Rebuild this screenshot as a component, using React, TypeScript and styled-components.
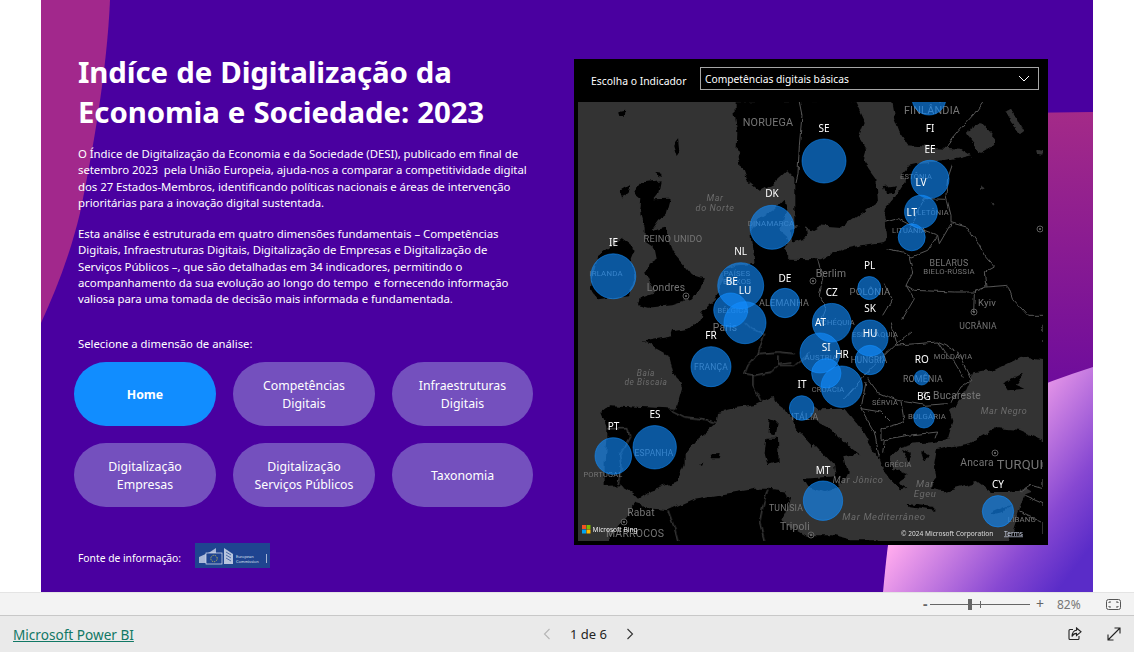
import React from "react";
import styled, { createGlobalStyle } from "styled-components";

const Global = createGlobalStyle`
  html, body { margin: 0; padding: 0; width: 1134px; height: 652px; overflow: hidden; background: #fff; }
  body { font-family: "Noto Sans", "Open Sans", sans-serif; }
`;

const Page = styled.div`
  width: 1134px; height: 652px; display: flex; flex-direction: column; background: #fff;
`;
const Stage = styled.div`
  height: 592px; display: flex; justify-content: center;
`;
const Canvas = styled.main`
  position: relative; width: 1052px; height: 592px; background: #4a00a0; overflow: hidden;
  display: flex; align-items: flex-start; color: #fff;
`;
const Decor = styled.svg`
  position: absolute; inset: 0; width: 1052px; height: 592px;
`;
const Left = styled.section`
  position: relative; width: 500px; margin-left: 33px; padding-top: 52px; display: flex; flex-direction: column;
`;
const Title = styled.h1`
  margin: 0 0 0 4px; font-size: 29.4px; line-height: 40px; font-weight: 700; white-space: nowrap; letter-spacing: -0.1px; word-spacing: 0.6px;
`;
const Body = styled.p<{ $top: number }>`
  margin: ${(p) => p.$top}px 0 0 4px; font-size: 11.4px; line-height: 16.3px; white-space: pre; letter-spacing: -0.04px;
`;
const Prompt = styled.div`
  margin: 28px 0 0 4px; font-size: 11.3px; line-height: 16px;
`;
const Buttons = styled.div`
  margin-top: 10px; display: grid; grid-template-columns: 142px 142px 141px; grid-auto-rows: 64px; column-gap: 17px; row-gap: 17px;
`;
const Pill = styled.button<{ $active?: boolean }>`
  border: 0; border-radius: 32px; padding: 2px 0 0; color: #fff; text-align: center; cursor: pointer;
  font-family: inherit; font-size: 12.3px; line-height: 17.5px;
  font-weight: ${(p) => (p.$active ? 700 : 400)};
  background: ${(p) => (p.$active ? "#118dff" : "#7450be")};
`;
const Source = styled.div`
  margin: 36px 0 0 4px; display: flex; align-items: center; gap: 14px; font-size: 10.3px;
`;
const SourceLabel = styled.span`
  padding-top: 5px;
`;
const LogoBox = styled.svg`
  width: 75px; height: 25px; display: block;
`;
const Panel = styled.section`
  position: relative; margin: 59px 0 0 0; width: 474px; height: 486px; background: #000; display: flex; flex-direction: column; padding: 8px 5px 4px 4px; box-sizing: border-box;
`;
const SlicerRow = styled.div`
  display: flex; align-items: center; height: 23px; margin-bottom: 12px; padding-left: 13px;
`;
const SlicerLabel = styled.span`
  width: 109px; font-size: 10.4px; white-space: nowrap; position: relative; top: 2px;
`;
const Select = styled.div`
  width: 339px; height: 23px; box-sizing: border-box; border: 1px solid #a6a6a6; display: flex; align-items: center; justify-content: space-between;
  padding: 0 8px 0 4px; font-size: 10.25px;
`;
const MapSvg = styled.svg`
  width: 465px; height: 439px; display: block;
`;
const ZoomBar = styled.div`
  height: 22px; background: #f3f3f3; border-top: 1px solid #e4e4e4; border-bottom: 1px solid #c8c8c8;
  display: flex; align-items: center; justify-content: flex-end; color: #666; font-size: 12px; padding-right: 13px;
`;
const Minus = styled.span`
  width: 7px; font-size: 14px; font-weight: 700; line-height: 1;
`;
const Track = styled.div`
  position: relative; width: 100px; height: 1px; background: #666; margin-right: 5px;
`;
const Thumb = styled.i`
  position: absolute; left: 38px; top: -5px; width: 4px; height: 11px; background: #666;
`;
const Tick = styled.i`
  position: absolute; left: 50px; top: -3px; width: 1px; height: 7px; background: #666;
`;
const Plus = styled.span`
  width: 10px; font-size: 14px; line-height: 1; text-align: center;
`;
const Percent = styled.span`
  width: 28px; margin-left: 12px; margin-right: 21px; color: #777; font-size: 12px;
`;
const Footer = styled.footer`
  flex: 1; background: #eaeaea; display: grid; grid-template-columns: 1fr auto 1fr; align-items: center; padding: 0 13px;
`;
const BrandLink = styled.a`
  color: #117865; font-size: 13.6px; text-decoration: underline; white-space: nowrap;
`;
const Pager = styled.div`
  display: flex; align-items: center; gap: 16px; font-size: 13px; color: #252423; margin-left: 43px;
`;
const Actions = styled.div`
  display: flex; justify-content: flex-end; gap: 25px;
`;

const land: Record<string, string[]> = {
  a: [
    "M470,-5 L470,40 478,90 476,135 488,190 505,235 545,266 585,245 628,205 650,228 665,240 690,300 720,370 790,375 900,300 895,230 830,140 860,60 830,-5Z",
    "M530,486 L520,385 545,352 590,322 620,290 626,318 610,380 632,420 612,442 640,470 705,472 705,665 364,665 368,630 410,590 430,540 442,500 480,490Z",
    "M640,382 L680,370 684,408 645,422Z",
    "M210,240 L245,235 236,280 226,292 275,290 262,340 240,356 218,388 265,376 285,450 320,490 345,520 380,530 370,560 340,590 280,610 210,617 180,610 186,586 232,570 216,540 205,512 215,482 236,470 230,440 200,420 200,380 186,330 190,292 166,272 190,240Z",
    "M60,462 L130,410 170,440 158,470 170,530 150,580 60,592 38,560 50,502Z",
    "M124,30 L142,26 140,42 128,42Z M236,210 L250,212 250,224 238,222Z M128,262 L155,245 150,270 135,290Z M286,130 L300,112 304,150 296,162Z",
  ],
  b: [
    "M-50,-5 L-50,370 0,385 30,368 60,340 100,300 110,232 150,190 165,140 115,60 130,-5Z",
    "M240,-5 L250,50 265,90 290,130 360,135 450,140 480,160 430,172 400,178 330,182 290,192 270,215 282,240 250,290 225,320 220,345 225,400 220,420 150,430 100,440 50,460 30,472 0,472 -10,665 705,665 705,-5Z",
    "M130,320 L160,280 165,300 145,330Z M218,255 L255,250 250,272 225,275Z",
  ],
  c: [
    "M365,-5 L340,15 285,25 280,40 195,55 230,80 275,105 285,145 300,175 312,200 295,260 190,255 100,250 70,272 85,310 85,350 80,420 80,492 125,490 160,510 180,530 210,510 270,490 300,480 320,430 320,400 360,350 415,305 420,270 470,258 530,250 580,225 620,255 640,290 655,320 705,375 705,-5Z",
    "M575,290 L596,298 590,342 572,335Z M565,350 L600,350 602,420 570,430 560,395Z M398,398 L425,396 422,412 402,412Z M362,425 L376,423 372,432Z",
    "M80,665 L100,640 140,590 175,545 230,560 270,565 350,530 440,515 530,500 570,500 620,505 636,530 625,570 610,600 680,640 705,648 705,665Z",
  ],
  d: [
    "M-10,-5 L-10,240 30,262 100,260 150,320 190,390 205,410 215,440 235,470 270,505 292,500 260,480 290,460 250,440 240,400 265,376 300,365 370,360 418,345 412,344 427,294 417,264 457,224 487,154 547,144 587,124 627,104 696,114 696,-5Z",
    "M696,354 L627,324 557,319 477,364 417,374 380,385 372,432 376,462 360,500 400,508 440,496 500,480 540,510 600,510 640,500 660,512 640,520 622,572 592,665 696,665Z",
    "M577,184 L637,154 612,188 640,200 590,205Z",
    "M-10,345 L70,430 75,470 95,482 110,450 100,402 135,395 150,400 110,370 60,322 0,290 -10,280Z",
    "M-20,470 L80,462 86,490 62,504 40,510 -5,496Z",
    "M290,545 L370,555 370,566 300,556Z",
    "M270,380 L300,395 290,420Z M330,390 L350,400 340,420Z",
    "M-10,640 L60,640 120,655 200,655 200,665 -10,665Z",
    "M540,570 L600,545 575,572 550,578Z",
  ],
};

const seaPatches: Record<string, string[]> = {
  b: [
    "M465,90 L510,60 556,110 545,136 510,156 480,120Z",
    "M582,30 L600,20 640,86 628,96 600,60Z",
    "M510,245 L525,255 505,262Z M672,142 L696,148 694,158 675,156Z M540,300 L552,308 546,314Z",
  ],
};

const borders: Record<string, string[]> = {
  a: ["M664,0 L672,40 664,130 660,215 654,240"],
  b: [
    "M515,0 L490,35 440,90 405,135",
    "M425,185 L410,230 405,280 420,340 420,362 470,376 500,420 520,460 550,495 520,512 525,555 590,550 605,590 650,640 699,640",
    "M225,360 L260,350 300,370 380,400 350,445 300,465 275,450 225,440",
    "M300,368 L340,290 405,292",
    "M525,555 L490,570 430,570 310,565 285,550 305,510 295,465",
    "M285,550 L310,590 275,650 M220,545 L245,590 215,640",
    "M20,470 L35,530 25,580 45,620 30,660",
    "M490,570 L488,630 M380,400 L385,425 420,365",
  ],
  c: [
    "M280,265 L320,285 370,290 415,302",
    "M90,320 L150,320 155,345 125,400 130,440 120,490",
    "M270,565 L290,620 300,660",
    "M570,500 L555,550 545,600 560,660",
    "M560,35 L540,95 510,130 500,155 530,160 580,150 600,130 650,130 699,90",
    "M540,95 L600,90 650,95 M525,160 L525,190 550,240 M600,100 L600,125 640,120",
    "M500,0 L520,20 560,35",
  ],
  d: [
    "M100,230 L170,150 250,70 380,60 440,90 470,150 480,175 450,195 420,245",
    "M170,170 L200,210 260,235 340,250 410,245",
    "M270,240 L280,300 210,320 210,355 290,340 380,330 372,352",
    "M150,260 L210,270 240,300 M165,180 L150,260 190,330 205,405 M240,0 L260,70",
    "M380,60 L400,90 430,120 460,170",
    "M220,355 L215,392",
    "M250,70 L300,30 M630,510 L660,490 696,500 M640,520 L696,545 M625,570 L690,600",
  ],
};

const origin: Record<string, [number, number]> = { a: [578, 102], b: [811, 102], c: [578, 322], d: [811, 322] };

type Lab = [string, number, number, number];
const mapLabels: Lab[] = [
  ["NORUEGA", 768, 126, 10.8], ["FINLÂNDIA", 932, 114, 10.8], ["REINO UNIDO", 673, 242, 9.3],
  ["Londres", 666, 291, 10.3], ["PAÍSES", 737, 276, 7.8], ["BAIXOS", 737, 284, 7.8], ["Berlim", 831, 277, 10.3],
  ["POLÔNIA", 870, 295, 9.5], ["BELARUS", 949, 266, 8.8], ["BIELO-RÚSSIA", 949, 274, 7.8], ["ESTÔNIA", 916, 179, 7.5],
  ["LETÔNIA", 933, 215, 7.5], ["LITUÂNIA", 909, 233, 7.5], ["DINAMARCA", 771, 226, 7.8], ["IRLANDA", 606, 276, 7.8],
  ["ALEMANHA", 784, 306, 9], ["Kyiv", 987, 306, 9.5], ["UCRÂNIA", 978, 329, 8.6], ["TCHÉQUIA", 836, 325, 7.5],
  ["ESLOVÁQUIA", 875, 337, 7.5], ["BÉLGICA", 733, 313, 7.5], ["Paris", 725, 331, 10.3], ["FRANÇA", 711, 370, 8.5],
  ["ÁUSTRIA", 821, 360, 7.8], ["HUNGRIA", 869, 363, 8.2], ["MOLDÁVIA", 953, 359, 7.5], ["ROMÊNIA", 923, 382, 8.8],
  ["CROÁCIA", 828, 392, 7.5], ["SÉRVIA", 885, 405, 7.5], ["Bucareste", 957, 399, 10.3], ["BULGÁRIA", 927, 419, 7.8],
  ["ITÁLIA", 805, 420, 8.8], ["ESPANHA", 654, 456, 8.4], ["PORTUGAL", 603, 477, 7.5], ["GRÉCIA", 898, 467, 7.5],
  ["Ancara", 977, 466, 10.3], ["TURQUI", 1020, 469, 13], ["TUNÍSIA", 786, 511, 8.7], ["Tripoli", 795, 530, 10.3],
  ["Rabat", 641, 516, 10.3], ["MARROCOS", 635, 537, 10.5], ["LÍBANO", 1022, 522, 7.8],
];
const seaLabels: Lab[] = [
  ["Mar", 715, 201, 9], ["do Norte", 715, 211, 9], ["Baía", 646, 376, 8.4], ["de Biscaia", 646, 385, 8.4],
  ["Mar Negro", 1004, 414, 9], ["Mar", 925, 487, 9.5], ["Egeu", 925, 497, 9.5], ["Mar Jônico", 858, 483, 9.2],
  ["Mar Mediterrâneo", 884, 520, 9.6],
];
const bubbles: [number, number, number][] = [
  [929, 98, 17], [824, 161, 22], [930, 179.3, 19], [921, 211.7, 16.5], [911.7, 237.3, 13.5], [772, 227.3, 22],
  [613.3, 276.3, 22.5], [740.7, 285.7, 23], [869.3, 288, 11.5], [785, 303, 14.7], [745, 322.7, 21], [730.7, 310, 17],
  [831.7, 322.7, 19.3], [870, 338, 18], [820, 353, 20], [870, 360, 14.7], [841.7, 386.7, 20.7], [826.3, 373.3, 14.7],
  [921.7, 377.7, 7.3], [711, 366.7, 20], [801.7, 408, 12.3], [924, 417.7, 10.3], [654.7, 447.3, 21.7], [613.3, 456, 18.3],
  [823, 500.7, 19.7], [998, 511.3, 15.7],
];
const codes: [string, number, number][] = [
  ["SE", 824, 132], ["FI", 930, 132], ["EE", 930, 152.5], ["LV", 921, 186], ["LT", 911.7, 215.5], ["DK", 772, 196.5],
  ["IE", 613.5, 245.5], ["NL", 740.7, 255], ["BE", 731.7, 285], ["LU", 745, 294], ["PL", 869.7, 268.5], ["DE", 785, 282],
  ["CZ", 831.7, 295.5], ["SK", 870, 311.5], ["AT", 820.5, 326], ["HU", 870, 336.5], ["SI", 826.3, 350.5], ["HR", 842, 357.5],
  ["RO", 921.7, 362.5], ["FR", 711, 338.5], ["IT", 802, 387.5], ["BG", 924, 399.5], ["ES", 655, 417.5], ["PT", 613.5, 429.5],
  ["MT", 823, 473.5], ["CY", 998, 487.5],
];
const cities: [number, number][] = [[686, 296], [813, 281], [1040, 229], [974, 312], [624, 522], [811, 535], [925, 395], [995, 453]];

function Europe() {
  return (
    <MapSvg viewBox="578 102 465 439" aria-label="Mapa da Europa">
      <defs>
        <filter id="coast" filterUnits="userSpaceOnUse" x="570" y="95" width="480" height="455">
          <feTurbulence type="fractalNoise" baseFrequency="0.09" numOctaves="3" seed="4" result="n" />
          <feDisplacementMap in="SourceGraphic" in2="n" scale="7" xChannelSelector="R" yChannelSelector="G" />
          <feGaussianBlur stdDeviation="0.35" />
        </filter>
        <filter id="line" filterUnits="userSpaceOnUse" x="570" y="95" width="480" height="455">
          <feTurbulence type="fractalNoise" baseFrequency="0.12" numOctaves="2" seed="9" result="n" />
          <feDisplacementMap in="SourceGraphic" in2="n" scale="4" xChannelSelector="R" yChannelSelector="G" />
          <feGaussianBlur stdDeviation="0.25" />
        </filter>
        <filter id="soft" filterUnits="userSpaceOnUse" x="570" y="95" width="480" height="455">
          <feGaussianBlur stdDeviation="0.2" />
        </filter>
      </defs>
      <rect x="578" y="102" width="465" height="439" fill="#333" />
      <g filter="url(#coast)">
        {Object.keys(land).map((k) => (
          <g key={k} transform={`translate(${origin[k][0]} ${origin[k][1]}) scale(${1 / 3})`}>
            {land[k].map((d, i) => <path key={i} d={d} fill="#000" />)}
            {(seaPatches[k] || []).map((d, i) => <path key={i} d={d} fill="#333" />)}
          </g>
        ))}
      </g>
      <g filter="url(#line)">
        {Object.keys(borders).map((k) => (
          <g key={k} transform={`translate(${origin[k][0]} ${origin[k][1]}) scale(${1 / 3})`}>
            {borders[k].map((d, i) => <path key={i} d={d} fill="none" stroke="#565656" strokeWidth="3" strokeLinejoin="round" />)}
          </g>
        ))}
      </g>
      {cities.map(([x, y], i) => (
        <g key={i}>
          <circle cx={x} cy={y} r="3" fill="none" stroke="#666" strokeWidth="0.9" />
          <circle cx={x} cy={y} r="1" fill="#777" />
        </g>
      ))}
      <g fontFamily="Roboto, 'Noto Sans', sans-serif" fill="#767676" textAnchor="middle" filter="url(#soft)">
        {mapLabels.map(([t, x, y, s], i) => <text key={i} x={x} y={y} fontSize={s} letterSpacing="0.2">{t}</text>)}
        {seaLabels.map(([t, x, y, s], i) => <text key={i} x={x} y={y} fontSize={s} fontStyle="italic" letterSpacing="0.6" fill="#6c6c6c">{t}</text>)}
      </g>
      <g>
        {bubbles.map(([x, y, r], i) => (
          <circle key={i} cx={x} cy={y} r={r} fill="#118dff" fillOpacity="0.62" stroke="#118dff" strokeOpacity="0.7" strokeWidth="0.8" />
        ))}
      </g>
      <g fontFamily="'Noto Sans', sans-serif" fontSize="10" fill="#fff" textAnchor="middle">
        {codes.map(([t, x, y]) => <text key={t} x={x} y={y}>{t}</text>)}
      </g>
      <g>
        <rect x="582" y="525" width="4" height="4" fill="#f25022" />
        <rect x="586.5" y="525" width="4" height="4" fill="#7fba00" />
        <rect x="582" y="529.5" width="4" height="4" fill="#00a4ef" />
        <rect x="586.5" y="529.5" width="4" height="4" fill="#ffb900" />
        <text x="592.5" y="532" fontFamily="'Noto Sans', sans-serif" fontSize="6.6" fill="#eee">Microsoft Bing</text>
        <text x="901" y="535.5" fontFamily="'Noto Sans', sans-serif" fontSize="6.6" fill="#ddd">© 2024 Microsoft Corporation</text>
        <text x="1004" y="535.5" fontFamily="'Noto Sans', sans-serif" fontSize="6.6" fill="#cfd6ea" textDecoration="underline">Terms</text>
      </g>
    </MapSvg>
  );
}

function CommissionLogo() {
  return (
    <LogoBox viewBox="0 0 75 25" aria-label="European Commission">
      <rect width="75" height="25" fill="#1f4490" />
      <path d="M4 14 L15 9 L21 5 L21 20 L4 20Z" fill="#a9b8d8" />
      <rect x="11" y="10" width="16" height="11" fill="#1f4490" stroke="#dfe6f3" strokeWidth="0.7" />
      <circle cx="19" cy="15.5" r="3.2" fill="none" stroke="#d7c94a" strokeWidth="0.9" strokeDasharray="1 1" />
      <path d="M29 5 L38 11 L38 21 L29 21Z" fill="#b7c4de" />
      <path d="M31 9 L36 12 M31 12 L36 15 M31 15 L36 18" stroke="#1f4490" strokeWidth="0.7" />
      <text x="41" y="14.5" fontSize="3.9" fill="#dfe6f3" fontFamily="'Noto Sans', sans-serif">European</text>
      <text x="41" y="19.5" fontSize="3.9" fill="#dfe6f3" fontFamily="'Noto Sans', sans-serif">Commission</text>
      <rect x="71" y="11" width="0.7" height="9" fill="#dfe6f3" />
    </LogoBox>
  );
}

export default function App() {
  const pills: [React.ReactNode, boolean?][] = [
    ["Home", true],
    [<>Competências<br />Digitais</>],
    [<>Infraestruturas<br />Digitais</>],
    [<>Digitalização<br />Empresas</>],
    [<>Digitalização<br />Serviços Públicos</>],
    ["Taxonomia"],
  ];
  return (
    <Page>
      <Global />
      <Stage>
        <Canvas>
          <Decor viewBox="0 0 1052 592" aria-hidden="true">
            <defs>
              <linearGradient id="mag" x1="0" y1="112" x2="0" y2="385" gradientUnits="userSpaceOnUse">
                <stop offset="0" stopColor="#a42a88" />
                <stop offset="1" stopColor="#6e0c9c" />
              </linearGradient>
              <linearGradient id="glow" x1="880" y1="440" x2="1040" y2="560" gradientUnits="userSpaceOnUse">
                <stop offset="0" stopColor="#ffaaee" />
                <stop offset="0.2" stopColor="#ffaaee" />
                <stop offset="0.75" stopColor="#8748d2" />
                <stop offset="1" stopColor="#5a2cc8" />
              </linearGradient>
            </defs>
            <path d="M0 0 L69 0 C66 70 52 150 39 213 C29 255 15 290 0 323Z" fill="#a2288c" />
            <path d="M700 116 L1052 112 L1052 400 L700 400Z" fill="url(#mag)" />
            <path d="M842 592 C845 560 848 530 855 500 C870 440 950 400 1052 367 L1052 592Z" fill="url(#glow)" />
          </Decor>
          <Left>
            <Title>Indíce de Digitalização da<br />Economia e Sociedade: 2023</Title>
            <Body $top={14}>{"O Índice de Digitalização da Economia e da Sociedade (DESI), publicado em final de\nsetembro 2023  pela União Europeia, ajuda-nos a comparar a competitividade digital\ndos 27 Estados-Membros, identificando políticas nacionais e áreas de intervenção\nprioritárias para a inovação digital sustentada."}</Body>
            <Body $top={15}>{"Esta análise é estruturada em quatro dimensões fundamentais – Competências\nDigitais, Infraestruturas Digitais, Digitalização de Empresas e Digitalização de\nServiços Públicos –, que são detalhadas em 34 indicadores, permitindo o\nacompanhamento da sua evolução ao longo do tempo  e fornecendo informação\nvaliosa para uma tomada de decisão mais informada e fundamentada."}</Body>
            <Prompt>Selecione a dimensão de análise:</Prompt>
            <Buttons>
              {pills.map(([label, active], i) => <Pill key={i} $active={active}>{label}</Pill>)}
            </Buttons>
            <Source>
              <SourceLabel>Fonte de informação:</SourceLabel>
              <CommissionLogo />
            </Source>
          </Left>
          <Panel>
            <SlicerRow>
              <SlicerLabel>Escolha o Indicador</SlicerLabel>
              <Select>
                <span>Competências digitais básicas</span>
                <svg width="12" height="7" viewBox="0 0 12 7" fill="none" stroke="#fff" strokeWidth="1"><path d="M1 1 L6 6 L11 1" /></svg>
              </Select>
            </SlicerRow>
            <Europe />
          </Panel>
        </Canvas>
      </Stage>
      <ZoomBar>
        <Minus>-</Minus>
        <Track><Thumb /><Tick /></Track>
        <Plus>+</Plus>
        <Percent>82%</Percent>
        <svg width="15" height="11" viewBox="0 0 15 11" fill="none" stroke="#555" strokeWidth="1">
          <rect x="0.5" y="0.5" width="14" height="10" rx="2" />
          <path d="M3 4 V3 H5 M10 3 H12 V4 M12 7 V8 H10 M5 8 H3 V7" />
        </svg>
      </ZoomBar>
      <Footer>
        <BrandLink href="#">Microsoft Power BI</BrandLink>
        <Pager>
          <svg width="8" height="12" viewBox="0 0 8 12" fill="none" stroke="#b5b5b5" strokeWidth="1.1"><path d="M6.5 1 L1.5 6 L6.5 11" /></svg>
          <span>&nbsp;1 de 6&nbsp;</span>
          <svg width="8" height="12" viewBox="0 0 8 12" fill="none" stroke="#333" strokeWidth="1.1"><path d="M1.5 1 L6.5 6 L1.5 11" /></svg>
        </Pager>
        <Actions>
          <svg width="14" height="14" viewBox="0 0 14 14" fill="none" stroke="#222" strokeWidth="1.1">
            <path d="M5 2.5 H2 A1 1 0 0 0 1 3.5 V11.5 A1 1 0 0 0 2 12.5 H10 A1 1 0 0 0 11 11.5 V9" />
            <path d="M8.5 1 L13 4.8 L8.5 8.5 V6.4 C6.5 6.4 5 7.4 4 9.5 C4.2 6 6 3.4 8.5 3.2Z" />
          </svg>
          <svg width="14" height="14" viewBox="0 0 14 14" fill="none" stroke="#222" strokeWidth="1.1">
            <path d="M1 13 L13 1 M7.5 1 H13 V6.5 M1 7.5 V13 H6.5" />
          </svg>
        </Actions>
      </Footer>
    </Page>
  );
}
